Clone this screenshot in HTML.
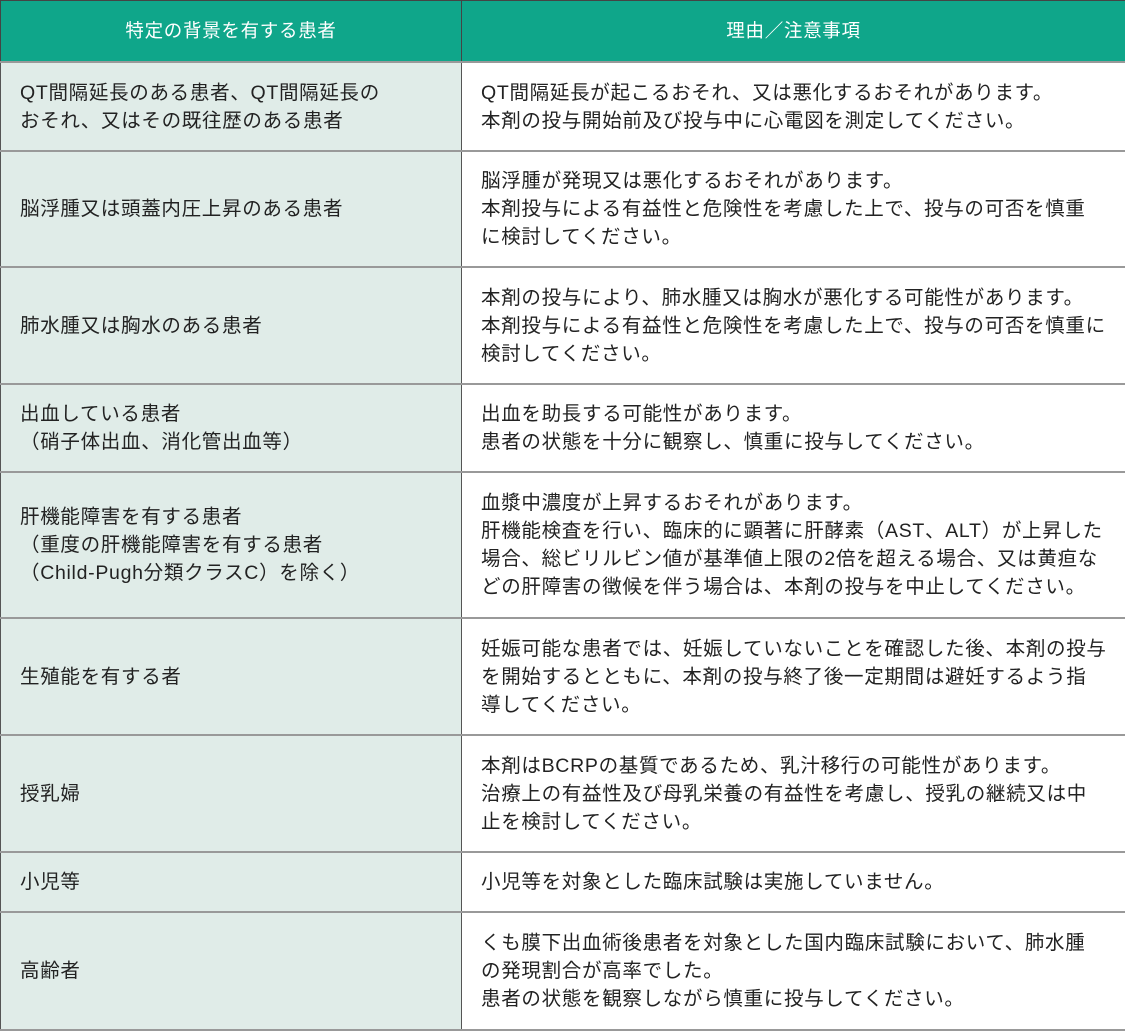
<!DOCTYPE html>
<html><head><meta charset="utf-8"><style>
body{margin:0;background:#fff;}
table{border-collapse:collapse;width:1125px;height:1029px;table-layout:fixed;font-family:"Liberation Sans","Noto Sans CJK JP",sans-serif;font-size:19.5px;letter-spacing:0.7px;color:#222;}
td,th{border:1px solid #555;padding:0 0 0 19px;line-height:28px;vertical-align:middle;text-align:left;white-space:nowrap;}
th{background:#0fa68a;color:#fff;font-weight:normal;text-align:center;padding:0;height:60px;border-color:#444;font-size:18.5px;}
tr td{border-top:2px solid #999;border-bottom:2px solid #999;}
td.l{background:#e0ece8;}
</style></head><body>
<table>
<col style="width:461px"><col style="width:664px">
<tr><th>特定の背景を有する患者</th><th>理由／注意事項</th></tr>
<tr style="height:89px"><td class="l">QT間隔延長のある患者、QT間隔延長の<br>おそれ、又はその既往歴のある患者</td><td>QT間隔延長が起こるおそれ、又は悪化するおそれがあります。<br>本剤の投与開始前及び投与中に心電図を測定してください。</td></tr>
<tr style="height:116px"><td class="l">脳浮腫又は頭蓋内圧上昇のある患者</td><td>脳浮腫が発現又は悪化するおそれがあります。<br>本剤投与による有益性と危険性を考慮した上で、投与の可否を慎重<br>に検討してください。</td></tr>
<tr style="height:117px"><td class="l">肺水腫又は胸水のある患者</td><td>本剤の投与により、肺水腫又は胸水が悪化する可能性があります。<br>本剤投与による有益性と危険性を考慮した上で、投与の可否を慎重に<br>検討してください。</td></tr>
<tr style="height:88px"><td class="l">出血している患者<br>（硝子体出血、消化管出血等）</td><td>出血を助長する可能性があります。<br>患者の状態を十分に観察し、慎重に投与してください。</td></tr>
<tr style="height:146px"><td class="l">肝機能障害を有する患者<br>（重度の肝機能障害を有する患者<br>（Child-Pugh分類クラスC）を除く）</td><td>血漿中濃度が上昇するおそれがあります。<br>肝機能検査を行い、臨床的に顕著に肝酵素（AST、ALT）が上昇した<br>場合、総ビリルビン値が基準値上限の2倍を超える場合、又は黄疸な<br>どの肝障害の徴候を伴う場合は、本剤の投与を中止してください。</td></tr>
<tr style="height:117px"><td class="l">生殖能を有する者</td><td>妊娠可能な患者では、妊娠していないことを確認した後、本剤の投与<br>を開始するとともに、本剤の投与終了後一定期間は避妊するよう指<br>導してください。</td></tr>
<tr style="height:117px"><td class="l">授乳婦</td><td>本剤はBCRPの基質であるため、乳汁移行の可能性があります。<br>治療上の有益性及び母乳栄養の有益性を考慮し、授乳の継続又は中<br>止を検討してください。</td></tr>
<tr style="height:60px"><td class="l">小児等</td><td>小児等を対象とした臨床試験は実施していません。</td></tr>
<tr style="height:118px"><td class="l">高齢者</td><td>くも膜下出血術後患者を対象とした国内臨床試験において、肺水腫<br>の発現割合が高率でした。<br>患者の状態を観察しながら慎重に投与してください。</td></tr>
</table>
</body></html>
